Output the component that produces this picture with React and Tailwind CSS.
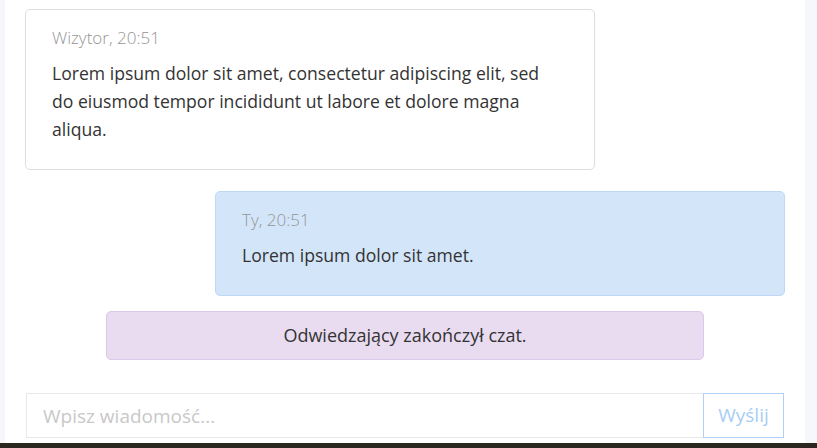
import React, { useState } from "react";

// wiadomości czatu
const messages = [
  {
    id: 1,
    author: "Wizytor",
    time: "20:51",
    text: "Lorem ipsum dolor sit amet, consectetur adipiscing elit, sed do eiusmod tempor incididunt ut labore et dolore magna aliqua.",
    mine: false,
  },
  {
    id: 2,
    author: "Ty",
    time: "20:51",
    text: "Lorem ipsum dolor sit amet.",
    mine: true,
  },
];

function Message({ msg }) {
  return (
    <div className={`flex ${msg.mine ? "justify-end" : "justify-start"}`}>
      <div
        className={`w-[570px] rounded-[5px] border px-[26px] pt-4 pb-[26px] ${
          msg.mine
            ? "bg-[#d3e5f9] border-[#bcd8f5]"
            : "bg-white border-[#dedede]"
        }`}
      >
        <div className="text-[17px] font-light leading-6 text-[#959595] mb-[9px]">
          {msg.author}, {msg.time}
        </div>
        <p className="max-w-[500px] text-[17.6px] leading-7 text-[#333]">
          {msg.text}
        </p>
      </div>
    </div>
  );
}

export default function App() {
  const [value, setValue] = useState("");

  return (
    <div
      className="h-[448px] w-[817px] flex flex-col bg-[#f6f7fa] overflow-hidden"
      style={{ fontFamily: '"Open Sans", "Noto Sans", sans-serif' }}
    >
      <div className="flex flex-1 min-h-0">
        <div className="w-[5px]" />
        <div className="w-[800px] bg-white flex flex-col pt-[9px] px-5">
          <div className="flex flex-col gap-[21px]">
            {messages.map((m) => (
              <Message key={m.id} msg={m} />
            ))}
          </div>

          <div className="mt-[15px] mx-auto w-[598px] h-[49px] rounded-[5px] border border-[#dcc8e8] bg-[#e9dcf1] flex items-center justify-center text-[18px] text-[#333]">
            Odwiedzający zakończył czat.
          </div>

          <div className="mt-[33px] flex ml-[1px] mr-[1px]">
            <input
              value={value}
              onChange={(e) => setValue(e.target.value)}
              placeholder="Wpisz wiadomość..."
              className="flex-1 h-[45px] border border-[#e8e8e8] px-4 text-[19px] text-[#333] placeholder:text-[#c8c8c8] outline-none"
            />
            <button className="w-[81px] h-[45px] -ml-[2px] border border-[#afd0f4] bg-white text-[19px] text-[#a8cdf5]">
              Wyślij
            </button>
          </div>
        </div>
        <div className="flex-1" />
      </div>
      <div className="h-[5px] bg-[#2c2620]" />
    </div>
  );
}
